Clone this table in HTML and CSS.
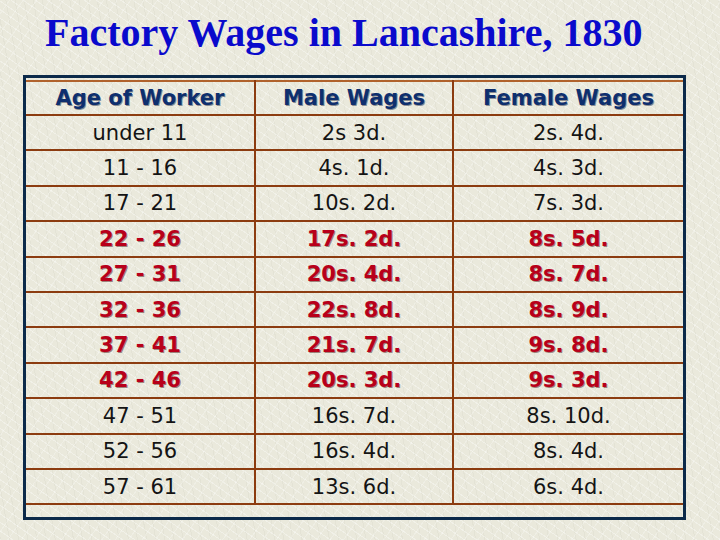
FILE: index.html
```html
<!DOCTYPE html>
<html lang="en">
<head>
<meta charset="utf-8">
<title>Factory Wages in Lancashire, 1830</title>
<link rel="stylesheet" href="styles.css">
</head>
<body>
<h1 class="title">Factory Wages in Lancashire, 1830</h1>
<div class="frame">
  <table class="wages">
    <thead>
      <tr><th>Age of Worker</th><th>Male Wages</th><th>Female Wages</th></tr>
    </thead>
    <tbody>
      <tr><td>under 11</td><td>2s 3d.</td><td>2s. 4d.</td></tr>
      <tr><td>11 - 16</td><td>4s. 1d.</td><td>4s. 3d.</td></tr>
      <tr><td>17 - 21</td><td>10s. 2d.</td><td>7s. 3d.</td></tr>
      <tr class="hi"><td>22 - 26</td><td>17s. 2d.</td><td>8s. 5d.</td></tr>
      <tr class="hi"><td>27 - 31</td><td>20s. 4d.</td><td>8s. 7d.</td></tr>
      <tr class="hi"><td>32 - 36</td><td>22s. 8d.</td><td>8s. 9d.</td></tr>
      <tr class="hi"><td>37 - 41</td><td>21s. 7d.</td><td>9s. 8d.</td></tr>
      <tr class="hi"><td>42 - 46</td><td>20s. 3d.</td><td>9s. 3d.</td></tr>
      <tr><td>47 - 51</td><td>16s. 7d.</td><td>8s. 10d.</td></tr>
      <tr><td>52 - 56</td><td>16s. 4d.</td><td>8s. 4d.</td></tr>
      <tr><td>57 - 61</td><td>13s. 6d.</td><td>6s. 4d.</td></tr>
    </tbody>
  </table>
</div>
</body>
</html>
```
FILE: styles.css
```css
html, body {
  margin: 0;
  padding: 0;
}
body {
  width: 720px;
  height: 540px;
  overflow: hidden;
  background-color: #eae9dc;
  background-image:
    repeating-linear-gradient(35deg, rgba(255,255,255,0.35) 0 1px, transparent 1px 7px),
    repeating-linear-gradient(-55deg, rgba(255,255,255,0.25) 0 1px, transparent 1px 11px),
    repeating-linear-gradient(80deg, rgba(200,200,185,0.18) 0 1px, transparent 1px 9px);
  font-family: "DejaVu Sans", "Open Sans", sans-serif;
}
.title {
  margin: 0;
  padding: 10px 0 0 45px;
  height: 66px;
  box-sizing: border-box;
  font-family: "Liberation Serif", "Times New Roman", serif;
  font-weight: bold;
  font-size: 40px;
  line-height: 46px;
  color: #0a0acc;
  white-space: nowrap;
}
.frame {
  margin: 9px 34px 0 23px;
  border: 3px solid #0c2a4a;
  padding: 2px 0 12px 0;
}
.wages {
  width: 100%;
  border-collapse: collapse;
  table-layout: fixed;
  border-top: 2px solid #b0622c;
  border-bottom: 2px solid #8c3c10;
}
.wages th:nth-child(1), .wages td:nth-child(1) { width: 228px; }
.wages th:nth-child(2), .wages td:nth-child(2) { width: 196px; }
.wages th, .wages td {
  text-align: center;
  padding: 0;
  font-size: 21px;
  color: #141414;
  border-bottom: 2px solid #8c3c10;
}
.wages th + th, .wages td + td {
  border-left: 2px solid #8c3c10;
}
.wages th {
  height: 32px;
  font-weight: bold;
  color: #0e2f6e;
  text-shadow: 1px 1px 0 rgba(10, 20, 50, 0.45);
}
.wages td {
  height: 33.4px;
}
.wages tbody tr:last-child td {
  border-bottom: none;
}
.wages tr.hi td {
  color: #b8001a;
  font-weight: bold;
  text-shadow: 1px 1px 0 rgba(60, 0, 0, 0.45);
}
```
